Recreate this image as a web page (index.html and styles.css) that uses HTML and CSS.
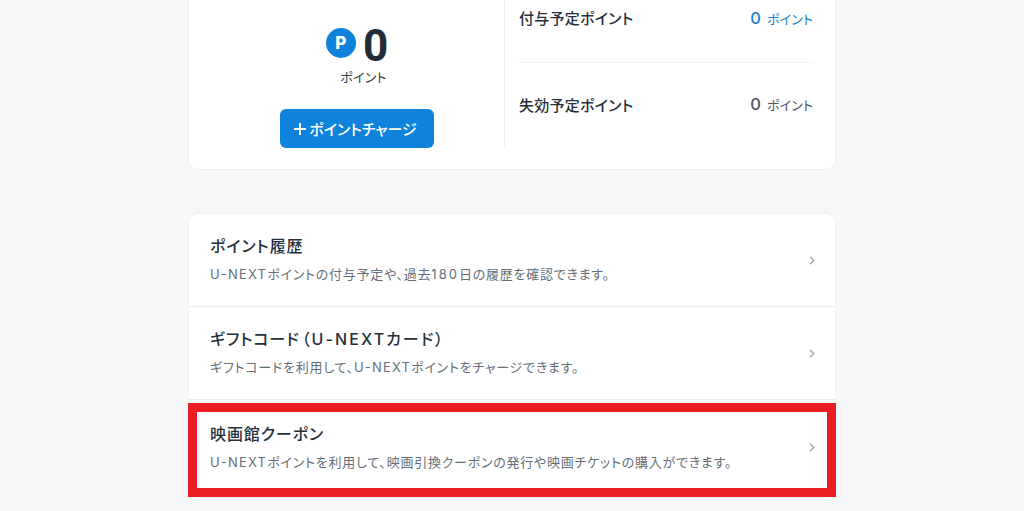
FILE: index.html

```html
<!DOCTYPE html>
<html lang="ja">
<head>
<title>U-NEXTポイント</title>
<meta name="viewport" content="width=device-width, initial-scale=1.0">
<link rel="stylesheet" href="styles.css">
</head>
<body>

<main class="page">
    <section class="card summary">
        <div class="balance">
            <div class="balance-value">
                <span class="p-icon">P</span>
                <span class="balance-num">0</span>
            </div>
            <div class="balance-unit">ポイント</div>
            <button type="button" class="charge-btn"><span class="plus"></span>ポイントチャージ</button>
        </div>
        <div class="schedule">
            <div class="schedule-row">
                <span class="schedule-label">付与予定ポイント</span>
                <span class="schedule-value blue"><b>0</b>ポイント</span>
            </div>
            <div class="schedule-row">
                <span class="schedule-label">失効予定ポイント</span>
                <span class="schedule-value"><b>0</b>ポイント</span>
            </div>
        </div>
    </section>

    <section class="card menu">
        <a class="menu-row">
            <div>
                <h3>ポイント履歴</h3>
                <p><span class="latin">U-NEXT</span>ポイントの付与予定や、過去<span class="digits">180</span>日の履歴を確認できます。</p>
            </div>
            <svg class="chevron" viewBox="0 0 6 9" width="6" height="9"><path d="M1 .8 4.700 4.500 1 8.200" fill="none" stroke="#a9afb6" stroke-width="1.600"/></svg>
        </a>
        <a class="menu-row">
            <div>
                <h3>ギフトコード<span class="paren">（<span class="latin">U-NEXT</span>カード）</span></h3>
                <p>ギフトコードを利用して、<span class="latin">U-NEXT</span>ポイントをチャージできます。</p>
            </div>
            <svg class="chevron" viewBox="0 0 6 9" width="6" height="9"><path d="M1 .8 4.700 4.500 1 8.200" fill="none" stroke="#a9afb6" stroke-width="1.600"/></svg>
        </a>
        <a class="menu-row marked">
            <div>
                <h3>映画館クーポン</h3>
                <p><span class="latin">U-NEXT</span>ポイントを利用して、映画引換クーポンの発行や映画チケットの購入ができます。</p>
            </div>
            <svg class="chevron" viewBox="0 0 6 9" width="6" height="9"><path d="M1 .8 4.700 4.500 1 8.200" fill="none" stroke="#a9afb6" stroke-width="1.600"/></svg>
        </a>
    </section>
</main>

</body>
</html>
```

FILE: styles.css

```css
html, body { margin: 0; height: 511px; overflow: hidden; }
body { background-color: #f5f7f9; color: #28303b; font-family: "Inter", "Noto Sans CJK JP", sans-serif; font-feature-settings: "palt"; }
.page { width: 648px; margin: 0 auto; }
.card { background-color: #fff; border: 1px solid #eef1f4; border-radius: 10px; }

.summary { display: flex; height: 170px; box-sizing: border-box; border-top: none; border-radius: 0 0 10px 10px; }
.balance { width: 316px; height: 148px; box-sizing: border-box; padding-left: 21px; border-right: 1px solid #eef1f4; display: flex; flex-direction: column; align-items: center; }
.balance-value { display: flex; align-items: flex-start; gap: 7px; margin-top: 28px; height: 38px; }
.p-icon { display: flex; align-items: center; justify-content: center; width: 30px; height: 30px; border-radius: 50%; background-color: #0f82dc; color: #fff; font-size: 17px; font-weight: 800; }
.balance-num { font-family: "Roboto", sans-serif; font-size: 44px; font-weight: 700; line-height: 36px; color: #222b38; }
.balance-unit { font-size: 13px; margin-top: 2px; padding-left: 13px; line-height: 18px; letter-spacing: 0.2px; color: #333a44; }
.charge-btn { display: flex; align-items: center; justify-content: center; width: 154px; height: 39px; margin-top: 23px; padding: 0 9px 0 6px; border: none; border-radius: 6px; background-color: #0f82dc; color: #fff; font-family: inherit; font-feature-settings: "palt"; font-size: 15px; font-weight: 500; }
.plus { width: 12px; height: 12px; margin-right: 3px; background: linear-gradient(#fff, #fff) center / 12px 2px no-repeat, linear-gradient(#fff, #fff) center / 2px 12px no-repeat; }

.schedule { flex: 1; margin: 0 22px 0 14px; }
.schedule-row { display: flex; justify-content: space-between; align-items: center; height: 35px; }
.schedule-row:first-child { padding-bottom: 27px; border-bottom: 1px solid #f1f3f5; }
.schedule-row:last-child { height: 82px; }
.schedule-label { font-size: 15px; font-weight: 500; letter-spacing: 0.25px; color: #28303b; }
.schedule-value { font-size: 13px; letter-spacing: 0.1px; color: #4c545e; }
.schedule-value b { font-size: 16.500px; font-weight: 500; margin-right: 6px; }
.schedule-value.blue { color: #1a7fcb; }

.menu { margin-top: 43px; }
.menu-row { display: flex; justify-content: space-between; align-items: center; height: 93px; box-sizing: border-box; padding: 0 20px 2px 21px; border-bottom: 1px solid #e9ecef; }
.menu-row h3 { margin: 0; font-size: 16px; font-weight: 500; line-height: 22px; letter-spacing: 0.9px; color: #28303b; }
.menu-row p { margin: 8px 0 0; font-size: 13px; line-height: 18px; letter-spacing: 0.75px; color: #666e78; }
.menu-row h3 .latin { letter-spacing: 2.100px; }
.menu-row p .latin { letter-spacing: 1.200px; }
.menu-row h3 .paren { margin-left: 2px; letter-spacing: 1.900px; }
.digits { letter-spacing: 2px; }
.chevron { margin-top: 2px; }
.menu-row.marked { height: 94px; margin: 3px -1px 0; padding: 0 12px 7px 13px; border: 9px solid #ec1c24; border-radius: 0; background-color: #fff; }
```
